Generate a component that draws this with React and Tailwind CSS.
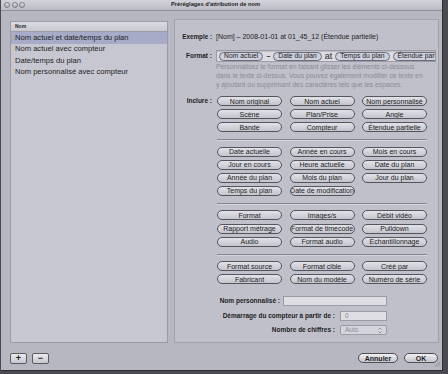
import React from "react";

const groups = [
  ["Nom original", "Nom actuel", "Nom personnalisé", "Scène", "Plan/Prise", "Angle", "Bande", "Compteur", "Étendue partielle"],
  ["Date actuelle", "Année en cours", "Mois en cours", "Jour en cours", "Heure actuelle", "Date du plan", "Année du plan", "Mois du plan", "Jour du plan", "Temps du plan", "Date de modification"],
  ["Format", "Images/s", "Débit vidéo", "Rapport métrage", "Format de timecode", "Pulldown", "Audio", "Format audio", "Échantillonnage"],
  ["Format source", "Format cible", "Créé par", "Fabricant", "Nom du modèle", "Numéro de série"],
];

const presets = [
  "Nom actuel et date/temps du plan",
  "Nom actuel avec compteur",
  "Date/temps du plan",
  "Nom personnalisé avec compteur",
];

function Pill({ label }) {
  return (
    <div className="h-[10px] w-[65px] rounded-full border border-[#55555c] bg-linear-to-b from-[#e2e3e8] to-[#c3c4cd] flex items-center justify-center text-[7px] leading-none text-[#1e1e1e] whitespace-nowrap overflow-hidden">
      {label}
    </div>
  );
}

function Token({ label }) {
  return (
    <span className="h-[9px] px-[4px] rounded-full border border-[#6a6b78] bg-[#cdd0dd] flex items-center text-[6.8px] leading-none text-[#1e1e1e] whitespace-nowrap shrink-0">
      {label}
    </span>
  );
}

function Light() {
  return <div className="w-[6px] h-[6px] rounded-full border border-[#7c7d86] bg-linear-to-b from-[#e4e4e9] to-[#a9aab3]" />;
}

function App() {
  return (
    <div
      className="w-[448px] h-[374px] bg-[#4a4a50] overflow-hidden text-[#1e1e1e]"
      style={{ fontFamily: '"Liberation Sans", Arial, sans-serif' }}
    >
      <div className="ml-[1px] w-[442px] h-[371px] bg-[#b6b7c1] flex flex-col border-r border-b border-[#2e2e34]">
        {/* title bar */}
        <div className="h-[11px] flex items-center bg-linear-to-b from-[#d2d3da] to-[#bbbcc5] border-b border-[#8f909a] px-[3px]">
          <div className="flex gap-[1.5px] w-[40px]">
            <Light />
            <Light />
            <Light />
          </div>
          <div className="flex-1 text-center text-[5.7px] font-bold leading-none pr-[52px]">
            Préréglages d'attribution de nom
          </div>
        </div>

        <div className="flex flex-1">
          {/* left column */}
          <div className="pl-[9px] pt-[10px] flex flex-col">
            <div className="w-[158px] h-[322px] bg-[#c6c7d0] border border-[#9a9ba5]">
              <div className="h-[10px] flex items-center pl-[4px] text-[5px] font-bold bg-linear-to-b from-[#dcdde2] to-[#c6c7cf] border-b border-[#9c9da6]">
                Nom
              </div>
              {presets.map((p, i) => (
                <div
                  key={p}
                  className={
                    "h-[11.5px] flex items-center pl-[4px] text-[7.6px] leading-none whitespace-nowrap " +
                    (i === 0 ? "bg-[#a7abc8]" : "")
                  }
                >
                  {p}
                </div>
              ))}
            </div>
            <div className="flex gap-[5px] mt-[10px]">
              <div className="w-[17px] h-[11px] rounded-[2px] border border-[#5a5a61] bg-linear-to-b from-[#ececf0] to-[#c6c7ce] flex items-center justify-center text-[9px] font-bold leading-none">
                +
              </div>
              <div className="w-[17px] h-[11px] rounded-[2px] border border-[#5a5a61] bg-linear-to-b from-[#ececf0] to-[#c6c7ce] flex items-center justify-center text-[9px] font-bold leading-none">
                −
              </div>
            </div>
          </div>

          {/* right column */}
          <div className="ml-[6px] pt-[8px] flex flex-col">
            <div className="w-[265px] h-[324px] bg-[#bfc0ca] border border-[#a1a2ac] flex flex-col">
              {/* Exemple */}
              <div className="flex items-center h-[10px] mt-[12px]">
                <div className="w-[37px] text-right text-[6.3px] font-bold whitespace-nowrap">Exemple :</div>
                <div className="ml-[4px] text-[7px] whitespace-nowrap">
                  [Nom] – 2008-01-01 at 01_45_12 (Étendue partielle)
                </div>
              </div>
              {/* Format */}
              <div className="flex items-center h-[12px] mt-[8px]">
                <div className="w-[37px] text-right text-[6.5px] font-bold whitespace-nowrap">Format :</div>
                <div className="ml-[4px] w-[220px] h-[12px] bg-[#dcdce2] border border-[#9c9da6] shadow-[inset_0_1px_1px_rgba(0,0,0,0.15)] flex items-center gap-[3px] pl-[2px] overflow-hidden">
                  <Token label="Nom actuel" />
                  <span className="text-[7px] font-bold">–</span>
                  <Token label="Date du plan" />
                  <span className="text-[9px] leading-none">at</span>
                  <Token label="Temps du plan" />
                  <Token label="Étendue partielle" />
                </div>
              </div>
              {/* description */}
              <div className="ml-[41px] text-[6.8px] leading-[9px] text-[#8a8b95] whitespace-nowrap">
                <div>Personnalisez le format en faisant glisser les éléments ci-dessous</div>
                <div>dans le texte ci-dessus. Vous pouvez également modifier ce texte en</div>
                <div>y ajoutant ou supprimant des caractères tels que les espaces.</div>
              </div>
              {/* Inclure */}
              <div className="flex mt-[7px]">
                <div className="w-[37px] text-right text-[6.5px] font-bold whitespace-nowrap leading-[10px]">Inclure :</div>
                <div className="ml-[5px] flex flex-col">
                  {groups.map((g, gi) => (
                    <div key={gi} className="flex flex-col">
                      {gi > 0 && (
                        <div className="w-[210px] h-px bg-[#85868f] mt-[7px] mb-[6.5px] shadow-[0_1px_0_#d4d5dc]" />
                      )}
                      <div className="grid grid-cols-[65px_65px_65px] gap-x-[7.5px] gap-y-[3.1px]">
                        {g.map((b) => (
                          <Pill key={b} label={b} />
                        ))}
                      </div>
                    </div>
                  ))}
                </div>
              </div>
              {/* fields */}
              <div className="flex items-center mt-[12px] h-[10px]">
                <div className="w-[105px] text-right text-[6.5px] font-bold whitespace-nowrap">Nom personnalisé :</div>
                <div className="ml-[3px] w-[104px] h-[10px] bg-[#dedee3] border border-[#9a9ba4]" />
              </div>
              <div className="flex items-center mt-[4.5px] h-[10px]">
                <div className="w-[160px] text-right text-[6.5px] font-bold whitespace-nowrap">Démarrage du compteur à partir de :</div>
                <div className="ml-[5px] w-[47px] h-[10px] bg-[#dedee3] border border-[#9a9ba4] flex items-center pl-[4px] text-[6.5px] text-[#8a8b95]">
                  0
                </div>
              </div>
              <div className="flex items-center mt-[4.5px] h-[10px]">
                <div className="w-[160px] text-right text-[6.5px] font-bold whitespace-nowrap">Nombre de chiffres :</div>
                <div className="ml-[5px] w-[47px] h-[10px] rounded-[2px] bg-[#d4d5dc] border border-[#9a9ba4] flex items-center justify-between px-[4px] text-[6.5px] text-[#8a8b95]">
                  <span>Auto</span>
                  <svg width="4" height="7" viewBox="0 0 4 7">
                    <path d="M0.5 2.5 L2 1 L3.5 2.5 M0.5 4.5 L2 6 L3.5 4.5" fill="none" stroke="#8a8b95" strokeWidth="0.8" />
                  </svg>
                </div>
              </div>
            </div>
            {/* dialog buttons */}
            <div className="flex justify-end gap-[6px] mt-[10px] pr-[1px] relative">
              <div className="w-[40px] h-[10px] rounded-full border border-[#4e4e55] bg-linear-to-b from-[#f0f0f3] to-[#c4c5cc] flex items-center justify-center text-[7px] font-bold leading-none">
                Annuler
              </div>
              <div className="w-[34px] h-[10px] rounded-full border border-[#4e4e55] bg-linear-to-b from-[#f0f0f3] to-[#c4c5cc] flex items-center justify-center text-[7px] font-bold leading-none">
                OK
              </div>
              <svg className="absolute right-[-2px] top-[7px]" width="7" height="7" viewBox="0 0 7 7">
                <path d="M6.5 1 L1 6.5 M6.5 3 L3 6.5 M6.5 5 L5 6.5" stroke="#8a8b94" strokeWidth="0.7" />
              </svg>
            </div>
          </div>
        </div>
      </div>
    </div>
  );
}

export default App;
